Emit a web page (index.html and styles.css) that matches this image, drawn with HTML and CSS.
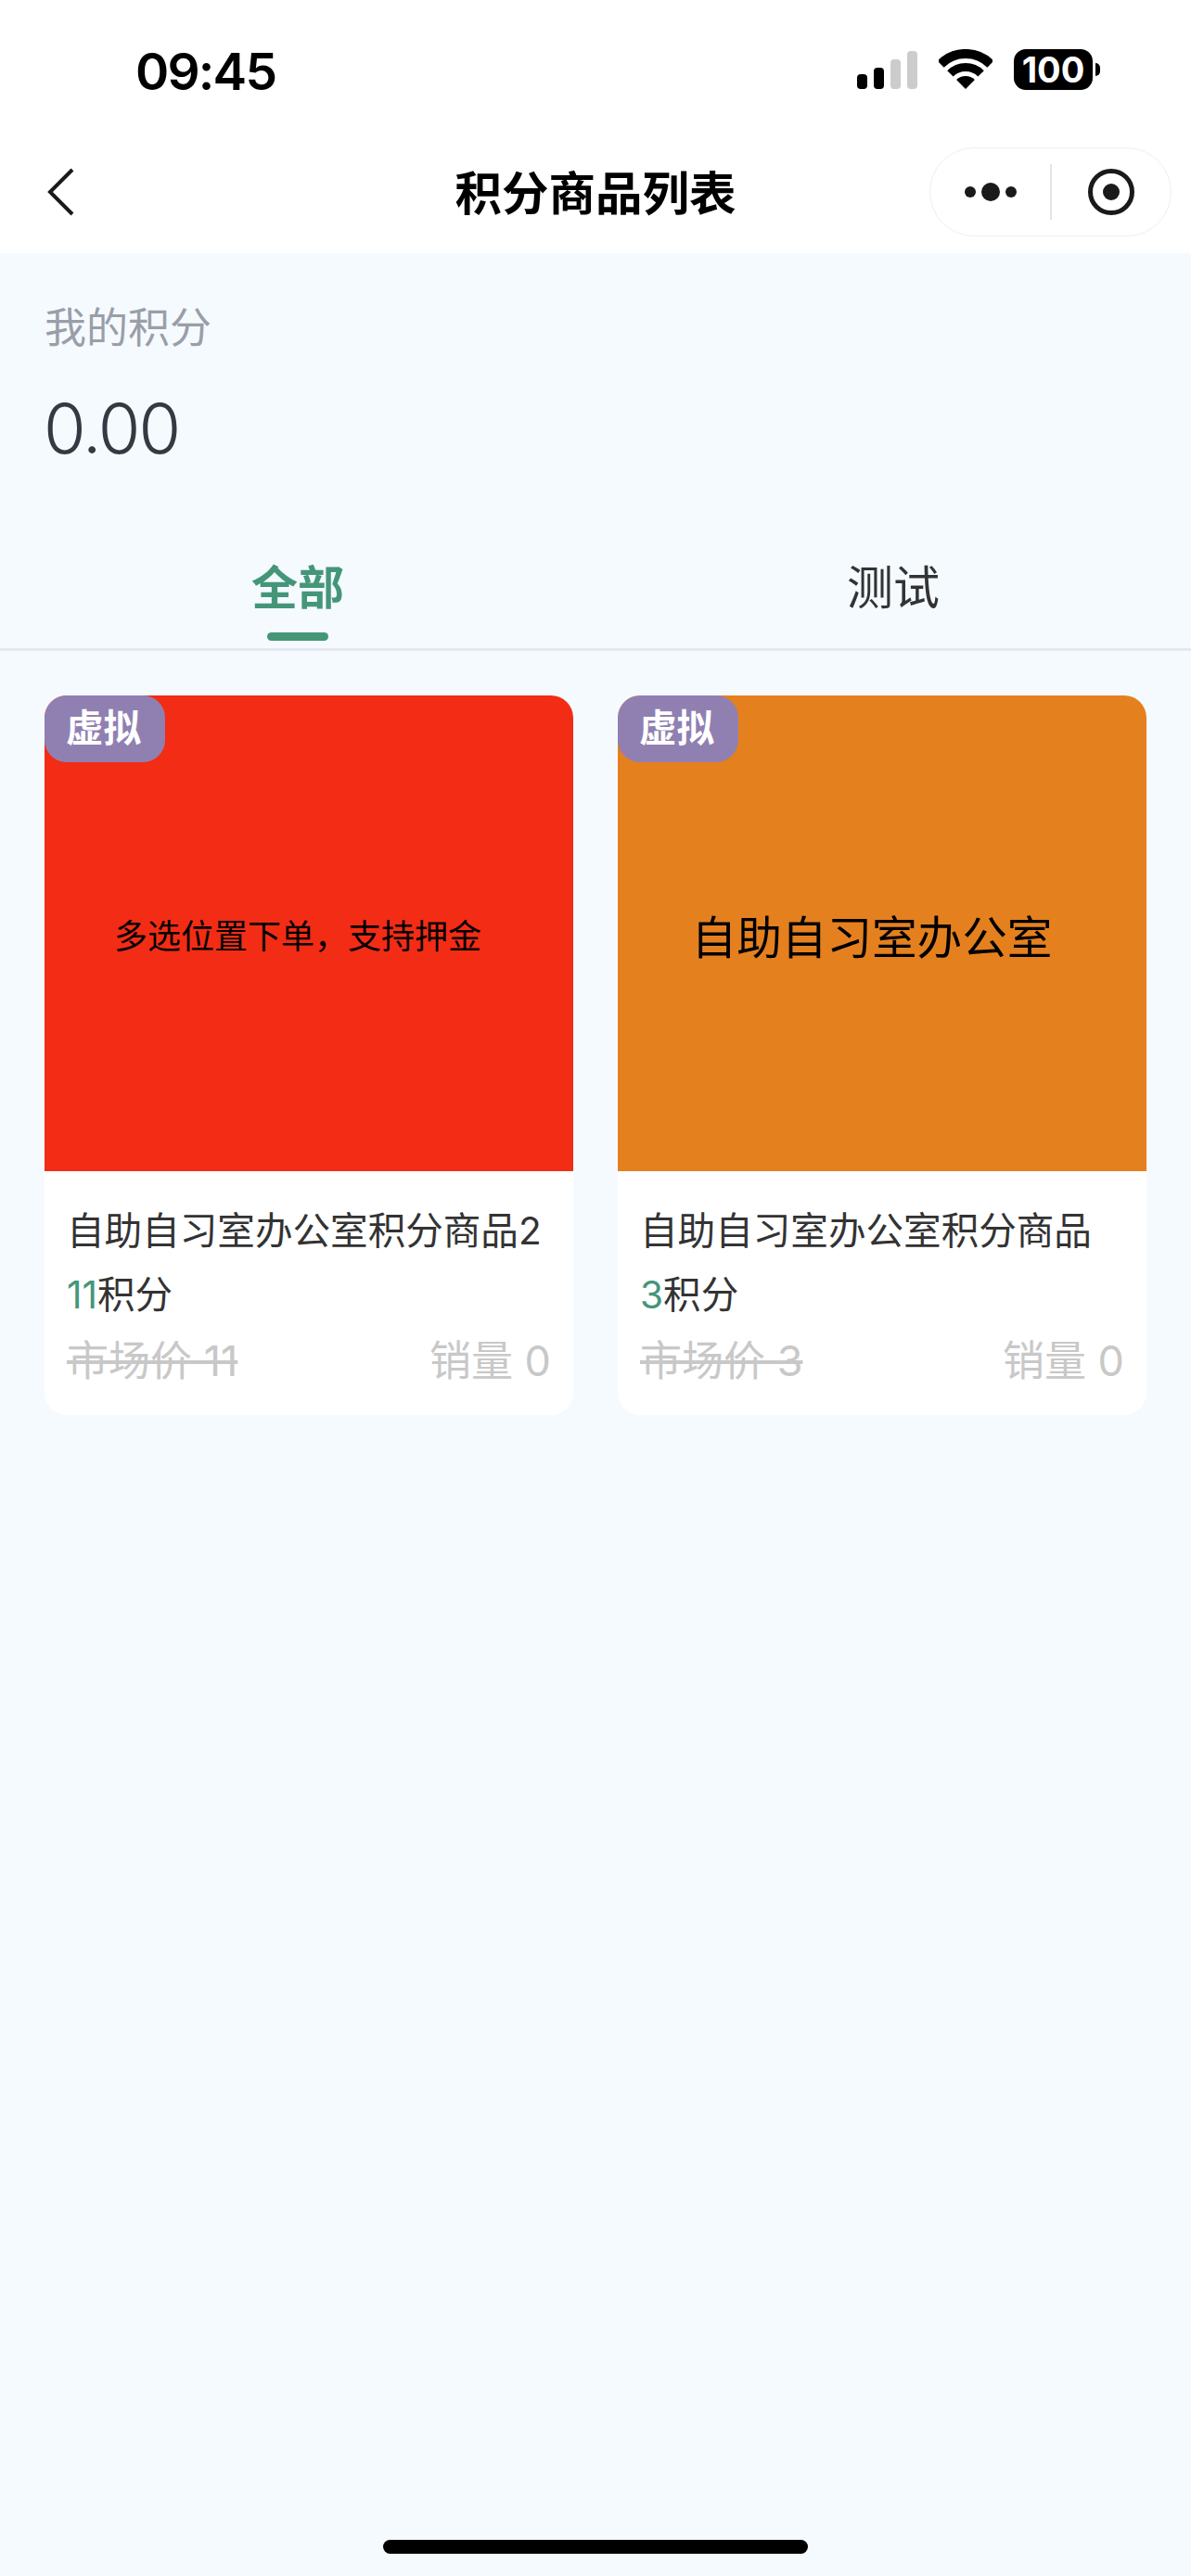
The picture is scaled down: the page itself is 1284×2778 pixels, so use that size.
FILE: index.html
```html
<!DOCTYPE html>
<html lang="zh">
  <head>
    <meta charset="UTF-8" />
    <meta name="viewport" content="width=device-width, initial-scale=1.0" />
    <title>积分商品列表</title>
    <link rel="stylesheet" href="styles.css">
  </head>
  <body>
    <!-- 状态栏 -->
    <div class="status-bar">
      <span class="status-time">09:45</span>
      <div class="status-icons">
        <div class="signal">
          <i class="bar-1"></i>
          <i class="bar-2"></i>
          <i class="bar-3"></i>
          <i class="bar-4"></i>
        </div>
        <svg class="wifi" width="58" height="43" viewBox="0 0 58 43">
          <path d="M2.1 16.1A38 38 0 0 1 55.9 16.1" fill="none" stroke="#000" stroke-width="10" />
          <path d="M12.4 26.4A23.5 23.5 0 0 1 45.6 26.4" fill="none" stroke="#000" stroke-width="9" />
          <path d="M29 43L19.1 33.1A14 14 0 0 1 38.9 33.1Z" fill="#000" />
        </svg>
        <div class="battery">
          <span class="battery-level">100</span>
          <i class="battery-cap"></i>
        </div>
      </div>
    </div>

    <!-- 导航栏 -->
    <div class="nav-bar">
      <svg class="nav-back" width="30" height="54" viewBox="0 0 30 54">
        <path d="M27 3L3 27L27 51" fill="none" stroke="#1a1a1a" stroke-width="4" />
      </svg>
      <div class="nav-title">积分商品列表</div>
      <div class="capsule">
        <div class="capsule-more">
          <i class="dot"></i>
          <i class="dot dot-big"></i>
          <i class="dot"></i>
        </div>
        <i class="capsule-line"></i>
        <svg class="capsule-close" width="52" height="52" viewBox="0 0 52 52">
          <circle cx="26" cy="26" r="22.5" fill="none" stroke="#1a1a1a" stroke-width="5" />
          <circle cx="26" cy="26" r="9" fill="#1a1a1a" />
        </svg>
      </div>
    </div>

    <!-- 我的积分 -->
    <div class="points">
      <div class="points-label">我的积分</div>
      <div class="points-value">0.00</div>
    </div>

    <!-- 分类 -->
    <div class="tabs">
      <div class="tab tab-active">全部</div>
      <div class="tab">测试</div>
    </div>

    <!-- 商品列表 -->
    <div class="goods-list">
      <div class="goods-card">
        <div class="goods-cover cover-red">
          <span class="goods-tag">虚拟</span>
          <span class="cover-text-small">多选位置下单，支持押金</span>
        </div>
        <div class="goods-info">
          <div class="goods-name">自助自习室办公室积分商品2</div>
          <div class="goods-price"><span class="price-num">11</span>积分</div>
          <div class="goods-meta">
            <span class="market-price">市场价 11</span>
            <span>销量 0</span>
          </div>
        </div>
      </div>
      <div class="goods-card">
        <div class="goods-cover cover-orange">
          <span class="goods-tag">虚拟</span>
          <span class="cover-text-big">自助自习室办公室</span>
        </div>
        <div class="goods-info">
          <div class="goods-name">自助自习室办公室积分商品</div>
          <div class="goods-price"><span class="price-num">3</span>积分</div>
          <div class="goods-meta">
            <span class="market-price">市场价 3</span>
            <span>销量 0</span>
          </div>
        </div>
      </div>
    </div>

    <div class="home-bar"></div>
  </body>
</html>
```

FILE: styles.css
```css
* {
  box-sizing: border-box;
}
body {
  margin: 0;
  min-height: 2778px;
  display: flex;
  flex-direction: column;
  background-color: #f5faff;
  color: #333;
  font-family: Inter, "Noto Sans CJK SC", sans-serif;
}
i {
  display: block;
}

/* 状态栏 */
.status-bar {
  height: 110px;
  padding: 44px 98px 0 146px;
  display: flex;
  justify-content: space-between;
  background-color: #fff;
  color: #000;
}
.status-time {
  font-size: 55px;
  font-weight: 600;
  letter-spacing: -1.8px;
  line-height: 66px;
}
.status-icons {
  display: flex;
  align-items: flex-start;
  padding-top: 9px;
}
.signal {
  display: flex;
  align-items: flex-end;
  gap: 7px;
  height: 43px;
  margin-right: 23px;
}
.signal i {
  width: 11px;
  border-radius: 4px;
  background-color: #000;
}
.signal .bar-1 {
  height: 16px;
}
.signal .bar-2 {
  height: 23px;
}
.signal .bar-3 {
  height: 32px;
  background-color: #ccc;
}
.signal .bar-4 {
  height: 41px;
  background-color: #ccc;
}
.wifi {
  margin-right: 23px;
}
.battery {
  display: flex;
  align-items: center;
  gap: 3px;
}
.battery-level {
  width: 85px;
  height: 44px;
  border-radius: 13px;
  background-color: #000;
  color: #fff;
  font-size: 38px;
  font-weight: 700;
  line-height: 44px;
  text-align: center;
}
.battery-cap {
  width: 5px;
  height: 14px;
  border-radius: 0 5px 5px 0;
  background-color: #000;
}

/* 导航栏 */
.nav-bar {
  height: 163px;
  padding: 49px 21px 18px 51px;
  display: flex;
  align-items: center;
  position: relative;
  background-color: #fff;
}
.nav-back {
  display: block;
}
.nav-title {
  position: absolute;
  left: 0;
  right: 0;
  top: 64px;
  color: #000;
  font-size: 50.5px;
  font-weight: 600;
  line-height: 70px;
  text-align: center;
}
.capsule {
  width: 261px;
  height: 96px;
  margin-left: auto;
  display: flex;
  align-items: center;
  padding-left: 37px;
  border: 1px solid #eee;
  border-radius: 48px;
  background-color: #fff;
}
.capsule-more {
  display: flex;
  align-items: center;
  gap: 6px;
}
.dot {
  width: 12px;
  height: 12px;
  border-radius: 50%;
  background-color: #1a1a1a;
}
.dot-big {
  width: 20px;
  height: 20px;
}
.capsule-line {
  width: 2px;
  height: 60px;
  margin-left: 36px;
  background-color: #e4e4e4;
}
.capsule-close {
  display: block;
  margin-left: 38px;
}

/* 我的积分 */
.points {
  padding: 55px 48px 0;
}
.points-label {
  color: #9a9ea8;
  font-size: 45px;
  line-height: 52px;
}
.points-value {
  margin-top: 37px;
  margin-left: -1px;
  color: #343a42;
  font-size: 74px;
  font-weight: 300;
  letter-spacing: -2px;
  line-height: 90px;
}

/* 分类 */
.tabs {
  margin-top: 94px;
  height: 101px;
  display: flex;
  border-bottom: 3px solid #e5e8f0;
}
.tab {
  flex: 1;
  position: relative;
  color: #333;
  font-size: 50px;
  line-height: 66px;
  text-align: center;
}
.tab-active {
  color: #459679;
  font-weight: 600;
}
.tab-active::after {
  content: '';
  position: absolute;
  left: 288px;
  top: 81px;
  width: 66px;
  height: 9px;
  border-radius: 5px;
  background-color: #459679;
}

/* 商品列表 */
.goods-list {
  padding: 48px 48px 0;
  display: flex;
  gap: 48px;
}
.goods-card {
  flex: 1;
  height: 776px;
  border-radius: 24px;
  overflow: hidden;
  background-color: #fff;
}
.goods-cover {
  height: 513px;
  padding: 7px 24px 0 0;
  position: relative;
  display: flex;
  align-items: center;
  justify-content: center;
  color: #000;
}
.cover-red {
  background-color: #f32c15;
}
.cover-orange {
  padding-right: 22px;
  background-color: #e5801e;
}
.cover-text-small {
  font-size: 36px;
  line-height: 50px;
  white-space: nowrap;
}
.cover-text-big {
  margin-top: 4px;
  font-size: 48.6px;
  line-height: 66px;
  white-space: nowrap;
}
.goods-tag {
  position: absolute;
  left: 0;
  top: 0;
  width: 130px;
  height: 72px;
  padding-right: 3px;
  border-radius: 24px;
  background-color: #9080b2;
  color: #fff;
  font-size: 40.5px;
  font-weight: 600;
  line-height: 72px;
  text-align: center;
}
.goods-info {
  padding: 36px 24px 0;
}
.goods-name {
  color: #333;
  font-size: 40.6px;
  line-height: 58px;
}
.goods-price {
  margin-top: 11px;
  color: #333;
  font-size: 40.6px;
  line-height: 58px;
}
.price-num {
  color: #459679;
}
.goods-meta {
  margin-top: 11px;
  display: flex;
  justify-content: space-between;
  color: #c8c8c8;
  font-size: 45px;
  line-height: 62px;
}
.market-price {
  text-decoration: line-through;
}

.home-bar {
  width: 458px;
  height: 15px;
  margin: auto auto 24px;
  border-radius: 8px;
  background-color: #000;
}
```
